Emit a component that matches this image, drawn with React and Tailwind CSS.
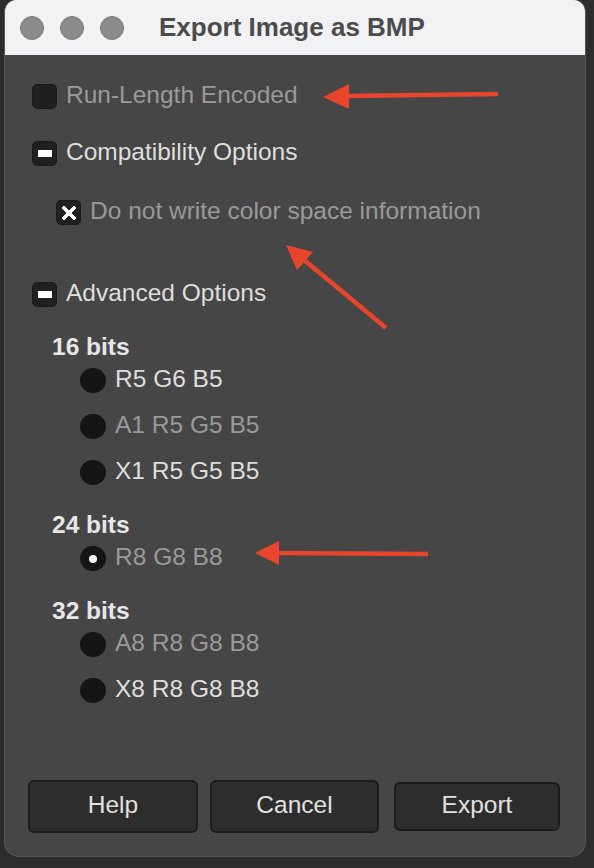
import React from "react";

const font = { fontFamily: '"Liberation Sans", Arial, Helvetica, sans-serif' };

function CheckBox({ state }) {
  return (
    <div className="w-[25px] h-[25px] shrink-0 rounded-[5px] bg-[#202020] border border-[#1a1a1a] flex items-center justify-center">
      {state === "minus" && <div className="w-[14px] h-[7px] bg-white" />}
      {state === "x" && (
        <svg width="14" height="14" viewBox="0 0 14 14" shapeRendering="crispEdges">
          <path d="M2 2 L12 12 M12 2 L2 12" stroke="#fff" strokeWidth="4" strokeLinecap="square" />
        </svg>
      )}
    </div>
  );
}

function Radio({ checked }) {
  return (
    <div className="w-[26px] h-[25px] shrink-0 rounded-full bg-[#151515] flex items-center justify-center">
      {checked && <div className="w-[8px] h-[8px] rounded-full bg-white" />}
    </div>
  );
}

function Row({ control, label, dim, bold, className = "" }) {
  return (
    <div className={`flex items-center h-[25px] ${className}`}>
      {control}
      <span
        className={`text-[24.5px] leading-[24px] whitespace-nowrap ${control ? "ml-[9px] pb-1" : ""} ${
          dim ? "text-[#9a9a9a]" : bold ? "text-[#e6e6e6] font-bold" : "text-[#dedede]"
        }`}
      >
        {label}
      </span>
    </div>
  );
}

function Button({ children, className = "" }) {
  return (
    <button
      type="button"
      className={`shrink-0 rounded-[6px] bg-[#2d2d2d] border-2 border-[#1c1c1c] text-[24.5px] leading-[24px] text-[#e0e0e0] flex items-center justify-center ${className}`}
    >
      <span className="pb-1">{children}</span>
    </button>
  );
}

function Arrows() {
  const c = "#e8452c";
  return (
    <svg className="absolute inset-0 pointer-events-none" width="594" height="868" viewBox="0 0 594 868">
      <line x1="498" y1="94" x2="345" y2="96" stroke={c} strokeWidth="4.5" />
      <polygon points="323,97 349,84 349,109" fill={c} />
      <line x1="386" y1="328" x2="303" y2="259" stroke={c} strokeWidth="4.5" />
      <polygon points="286,245 313,252 297,270" fill={c} />
      <line x1="428" y1="554" x2="275" y2="553" stroke={c} strokeWidth="4.5" />
      <polygon points="255,553 279,541 279,565" fill={c} />
    </svg>
  );
}

export default function App() {
  return (
    <div className="relative w-[594px] h-[868px] bg-[#2d2d2d] overflow-hidden" style={font}>
      <div className="ml-[4px] w-[582px] h-[857px] rounded-t-[12px] rounded-b-[15px] overflow-hidden flex flex-col bg-[#464646] border-x border-b border-[#555]">
        <div className="h-[55px] shrink-0 bg-[#f1f2f3] flex items-center pl-[15px]">
          <div className="flex gap-[16px]">
            <div className="w-[24px] h-[24px] rounded-full bg-[#8b8b8b] border border-[#7b7b7b]" />
            <div className="w-[24px] h-[24px] rounded-full bg-[#8b8b8b] border border-[#7b7b7b]" />
            <div className="w-[24px] h-[24px] rounded-full bg-[#8b8b8b] border border-[#7b7b7b]" />
          </div>
          <span className="ml-[35px] text-[26px] font-bold text-[#4b4b4b] pb-[1px]">Export Image as BMP</span>
        </div>

        <div className="flex-1 flex flex-col pl-[27px] pt-[29px]">
          <Row control={<CheckBox />} label="Run-Length Encoded" dim />
          <Row control={<CheckBox state="minus" />} label="Compatibility Options" className="mt-[32px]" />
          <Row control={<CheckBox state="x" />} label="Do not write color space information" dim className="mt-[34px] ml-[24px]" />
          <Row control={<CheckBox state="minus" />} label="Advanced Options" className="mt-[57px]" />

          <div className="ml-[20px] flex flex-col">
            <Row label="16 bits" bold className="mt-[27px]" />
            <div className="ml-[28px] flex flex-col">
              <Row control={<Radio />} label="R5 G6 B5" className="mt-[9px]" />
              <Row control={<Radio />} label="A1 R5 G5 B5" dim className="mt-[21px]" />
              <Row control={<Radio />} label="X1 R5 G5 B5" className="mt-[21px]" />
            </div>

            <Row label="24 bits" bold className="mt-[27px]" />
            <div className="ml-[28px] flex flex-col">
              <Row control={<Radio checked />} label="R8 G8 B8" dim className="mt-[9px]" />
            </div>

            <Row label="32 bits" bold className="mt-[27px]" />
            <div className="ml-[28px] flex flex-col">
              <Row control={<Radio />} label="A8 R8 G8 B8" dim className="mt-[9px]" />
              <Row control={<Radio />} label="X8 R8 G8 B8" className="mt-[21px]" />
            </div>
          </div>

          <div className="mt-auto mb-[23px] -ml-[4px] flex h-[53px] items-center">
            <Button className="w-[170px] h-[53px]">Help</Button>
            <Button className="ml-[12px] w-[169px] h-[53px]">Cancel</Button>
            <Button className="ml-[15px] w-[166px] h-[49px]">Export</Button>
          </div>
        </div>
      </div>
      <Arrows />
    </div>
  );
}
